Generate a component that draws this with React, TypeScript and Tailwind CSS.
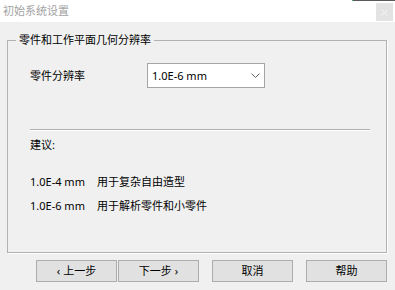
const font = { fontFamily: '"Noto Sans", "Noto Sans CJK SC", sans-serif' };

function Btn({ label }: { label: string }) {
  return (
    <button className="w-[81px] h-[22px] bg-[#e1e1e1] border border-[#adadad] text-[11px] leading-[20px] text-black">
      {label}
    </button>
  );
}

export default function App() {
  return (
    <div className="w-[395px] h-[290px] bg-[#f0f0f0] overflow-hidden text-[11px] text-black" style={font}>
      {/* title bar */}
      <div className="relative h-[22px] bg-white flex items-center justify-between">
        <div className="absolute top-0 right-0 h-px w-[43px] bg-[#5a5a5a] border-l border-[#3cbf6a]" />
        <span className="pl-[3px] text-[11px] leading-[16px] text-[#a3a3a3]">初始系统设置</span>
        <div className="mr-[2px] mt-[2px] w-[17px] h-[18px] bg-[#e3e3e3] flex items-center justify-center">
          <svg width="7" height="7" viewBox="0 0 7 7">
            <path d="M0.5 0.5 L6.5 6.5 M6.5 0.5 L0.5 6.5" stroke="#f7f7f7" strokeWidth="1" />
          </svg>
        </div>
      </div>

      {/* group box */}
      <fieldset className="mt-[10px] ml-[7px] w-[380px] border border-[#b2b2b2] shadow-[1px_1px_0_#ffffff] pb-[38px]">
        <legend className="ml-[8px] px-[3px] leading-[16px]">零件和工作平面几何分辨率</legend>

        <div className="mt-[15px] pl-[22px] flex items-center">
          <span className="w-[117px] leading-[16px]">零件分辨率</span>
          <div className="w-[118px] h-[25px] bg-white border border-[#a5a5a5] flex items-center justify-between pl-[4px] pr-[4px]">
            <span className="leading-[16px]">1.0E-6 mm</span>
            <svg width="9" height="5" viewBox="0 0 9 5">
              <path d="M0.5 0.5 L4.5 4.5 L8.5 0.5" fill="none" stroke="#606060" strokeWidth="1" />
            </svg>
          </div>
        </div>

        <div className="mt-[41px] ml-[22px] w-[340px] h-[2px] border-t border-b border-t-[#b0b0b0] border-b-white" />

        <div className="mt-[6px] pl-[22px] leading-[16px]">建议:</div>
        <div className="mt-[21px] pl-[22px] flex leading-[16px]">
          <span className="w-[67px]">1.0E-4 mm</span>
          <span>用于复杂自由造型</span>
        </div>
        <div className="mt-[8px] pl-[22px] flex leading-[16px]">
          <span className="w-[67px]">1.0E-6 mm</span>
          <span>用于解析零件和小零件</span>
        </div>
      </fieldset>

      {/* buttons */}
      <div className="mt-[7px] ml-[36px] flex">
        <Btn label="‹ 上一步" />
        <div className="ml-[1px]">
          <Btn label="下一步 ›" />
        </div>
        <div className="ml-[13px]">
          <Btn label="取消" />
        </div>
        <div className="ml-[13px]">
          <Btn label="帮助" />
        </div>
      </div>
    </div>
  );
}
